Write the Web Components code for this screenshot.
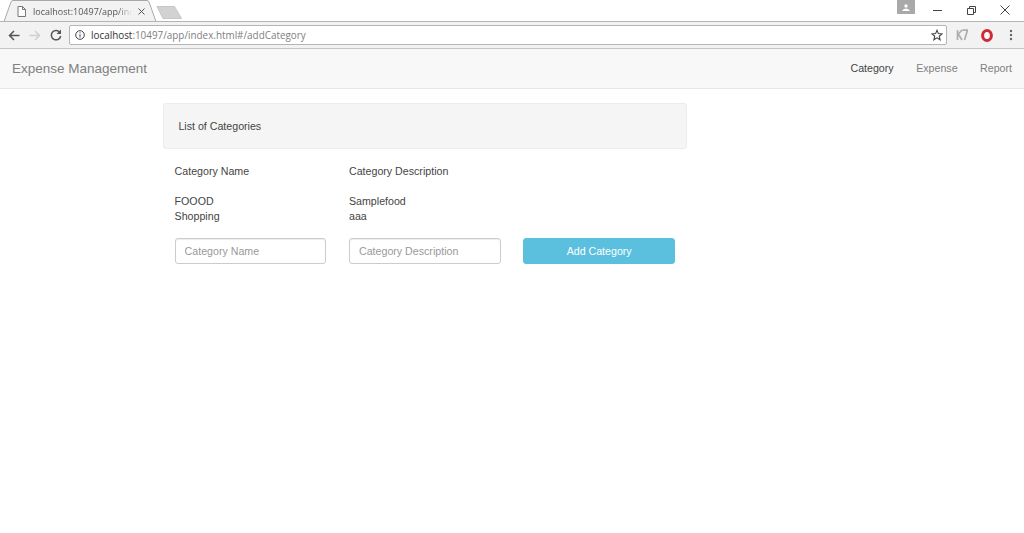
<!DOCTYPE html>
<html>
<head>
<meta charset="utf-8">
<title>Expense Management</title>
<style>
  html, body { margin: 0; height: 100%; background: #fff; overflow: hidden; }
  body { font: 10.65px/15px "Liberation Sans", Arial, sans-serif; color: #444; }
</style>
</head>
<body>
<browser-tabs></browser-tabs>
<browser-toolbar url="localhost" path=":10497/app/index.html#/addCategory"></browser-toolbar>
<app-navbar brand="Expense Management">
  <nav-link active>Category</nav-link>
  <nav-link>Expense</nav-link>
  <nav-link>Report</nav-link>
</app-navbar>
<category-page></category-page>

<script>
class BrowserTabs extends HTMLElement {
  constructor() {
    super();
    this.shadowDOM = this.attachShadow({ mode: 'open' });
    this.shadowDOM.innerHTML = `
      <style>
        :host { display: flex; height: 22px; background: #fff; position: relative; font: 9px "Open Sans", sans-serif; color: #555; }
        .line { position: absolute; left: 0; right: 0; bottom: 0; height: 1px; background: #b4b4b4; }
        .shape { position: absolute; left: 0; top: 0; }
        .tab { position: relative; display: flex; align-items: center; width: 152px; height: 22px; box-sizing: border-box; padding: 0 0 0 17px; }
        .title { margin-left: 7px; width: 101px; white-space: nowrap;
          -webkit-mask-image: linear-gradient(90deg, #000 84%, transparent 98%); }
        .close { margin-left: 4px; }
        .spacer { flex: 1; }
        .user { width: 18px; height: 14px; background: #a9a9a9; margin-right: 5px; display: flex; align-items: center; justify-content: center; position: relative; }
        .win { width: 34px; height: 20px; display: flex; align-items: center; justify-content: center; }
        .last { margin-right: 2px; }
      </style>
      <svg class="shape" width="190" height="22">
        <path d="M0 21.5H4L11 2Q11.500 .5 13 .5H147Q148.500 .5 149 2L156 21.500" fill="#f2f2f2" stroke="#a8a8a8"/>
        <path d="M157 6.500H174.500L181.500 18.500H163Z" fill="#d2d2d2" stroke="#c6c6c6"/>
      </svg>
      <div class="line"></div>
      <div class="tab">
        <svg width="9" height="11" viewBox="0 0 9 11"><path d="M1 .5H5.500L8.500 3.500V10.500H1ZM5.500 .5V3.500H8.500" fill="#fff" stroke="#777"/></svg>
        <span class="title">localhost:10497/app/inde</span>
        <svg class="close" width="7" height="7" viewBox="0 0 7 7"><path d="M.5 .5L6.500 6.500M6.500 .5L.5 6.500" stroke="#555"/></svg>
      </div>
      <div class="spacer"></div>
      <div class="user" style="align-self:flex-start">
        <svg width="8" height="7" viewBox="0 0 8 7"><circle cx="4" cy="2" r="1.700" fill="#fff"/><path d="M0 7Q1 4.500 4 4.500T8 7Z" fill="#fff"/></svg>
      </div>
      <div class="win"><svg width="9" height="1"><rect width="9" height="1" fill="#444"/></svg></div>
      <div class="win"><svg width="9" height="9" viewBox="0 0 9 9"><path d="M.5 2.500H6.500V8.500H.5ZM2.500 2.500V.5H8.500V6.500H6.500" fill="none" stroke="#444"/></svg></div>
      <div class="win last"><svg width="10" height="10" viewBox="0 0 10 10"><path d="M.5 .5L9.500 9.500M9.500 .5L.5 9.500" stroke="#444"/></svg></div>
    `;
  }
}

class BrowserToolbar extends HTMLElement {
  constructor() {
    super();
    this.shadowDOM = this.attachShadow({ mode: 'open' });
  }

  connectedCallback() {
    this.shadowDOM.innerHTML = `
      <style>
        :host { display: flex; align-items: center; height: 27px; box-sizing: border-box; background: #f2f2f2; border-bottom: 1px solid #c4c4c4; font: 9.9px "Open Sans", sans-serif; }
        .nav { display: flex; align-items: center; gap: 9px; margin-left: 8px; }
        .box { flex: 1; height: 20px; margin-left: 7px; box-sizing: border-box; background: #fff; border: 1px solid #b5b5b5; border-radius: 2px; display: flex; align-items: center; padding: 0 3px 0 5px; }
        .url { margin-left: 6px; color: #333; white-space: nowrap; flex: 1; }
        .url span { color: #808080; }
        .ext { display: flex; align-items: center; margin: 0 11px 0 9px; }
        .ext svg + svg { margin-left: 13px; }
        .ext svg + svg + svg { margin-left: 16px; }
      </style>
      <div class="nav">
        <svg width="12" height="11" viewBox="0 0 12 11"><path d="M11.500 5.500H1.500M6 1L1.500 5.500L6 10" fill="none" stroke="#555" stroke-width="1.500"/></svg>
        <svg width="12" height="11" viewBox="0 0 12 11"><path d="M.5 5.500H10.500M6 1L10.500 5.500L6 10" fill="none" stroke="#d0d0d0" stroke-width="1.500"/></svg>
        <svg width="12" height="12" viewBox="0 0 12 12"><path d="M10 3.500A4.700 4.700 0 1 0 10.700 7" fill="none" stroke="#555" stroke-width="1.500"/><path d="M11 .5V5H6.500Z" fill="#555"/></svg>
      </div>
      <div class="box">
        <svg width="10" height="10" viewBox="0 0 10 10"><circle cx="5" cy="5" r="4.300" fill="none" stroke="#444"/><path d="M5 4.300V7.500M5 2.400V3.400" stroke="#444"/></svg>
        <div class="url">${this.getAttribute('url')}<span>${this.getAttribute('path')}</span></div>
        <svg width="12" height="12" viewBox="0 0 24 24"><path d="M12 2.500L14.800 9.200L22 9.800L16.500 14.500L18.200 21.500L12 17.800L5.800 21.500L7.500 14.500L2 9.800L9.200 9.200Z" fill="none" stroke="#444" stroke-width="2.200"/></svg>
      </div>
      <div class="ext">
        <svg width="12" height="12" viewBox="0 0 12 12"><path d="M1.500 1V11M1.500 6L6 1M2.500 5.500L6 11M6.500 1.200H11.500L8.500 11" fill="none" stroke="#a9b0b0" stroke-width="1.700"/></svg>
        <svg width="12" height="13" viewBox="0 0 12 13"><ellipse cx="6" cy="6.500" rx="4.400" ry="5" fill="none" stroke="#cf2a33" stroke-width="3"/><ellipse cx="6" cy="6.500" rx="1.300" ry="3.600" fill="#fff"/></svg>
        <svg width="4" height="12" viewBox="0 0 4 12"><circle cx="2" cy="2" r="1.200" fill="#666"/><circle cx="2" cy="6" r="1.200" fill="#666"/><circle cx="2" cy="10" r="1.200" fill="#666"/></svg>
      </div>
    `;
  }
}

class NavLink extends HTMLElement {
  constructor() {
    super();
    this.shadowDOM = this.attachShadow({ mode: 'open' });
    this.shadowDOM.innerHTML = `
      <style>
        :host { display: block; color: #808080; }
        :host([active]) { color: #444; }
      </style>
      <slot></slot>
    `;
  }
}

class AppNavbar extends HTMLElement {
  constructor() {
    super();
    this.shadowDOM = this.attachShadow({ mode: 'open' });
  }

  connectedCallback() {
    this.shadowDOM.innerHTML = `
      <style>
        :host { display: flex; align-items: center; justify-content: space-between; height: 40px; box-sizing: border-box; padding: 0 12px; background: #f8f8f8; border-bottom: 1px solid #e7e7e7; }
        .brand { font-size: 13.5px; color: #808080; }
        .links { display: flex; gap: 22.500px; }
      </style>
      <div class="brand">${this.getAttribute('brand')}</div>
      <div class="links"><slot></slot></div>
    `;
  }
}

class PanelHeading extends HTMLElement {
  constructor() {
    super();
    this.shadowDOM = this.attachShadow({ mode: 'open' });
    this.shadowDOM.innerHTML = `
      <style>
        :host { display: flex; align-items: center; height: 46px; box-sizing: border-box; padding: 0 14.400px; background: #f5f5f5; border: 1px solid #ececec; border-radius: 3px; }
      </style>
      <slot></slot>
    `;
  }
}

class TextField extends HTMLElement {
  constructor() {
    super();
    this.shadowDOM = this.attachShadow({ mode: 'open' });
  }

  connectedCallback() {
    this.shadowDOM.innerHTML = `
      <style>
        :host { display: block; }
        input { display: block; width: 100%; height: 26px; box-sizing: border-box; padding: 0 9px; background: #fff; border: 1px solid #ccc; border-radius: 3px; font: inherit; color: #555; box-shadow: inset 0 1px 1px rgba(0,0,0,.075); outline: none; }
        input::placeholder { color: #999; opacity: 1; }
      </style>
      <input type="text" placeholder="${this.getAttribute('placeholder')}">
    `;
  }
}

class InfoButton extends HTMLElement {
  constructor() {
    super();
    this.shadowDOM = this.attachShadow({ mode: 'open' });
    this.shadowDOM.innerHTML = `
      <style>
        :host { display: flex; align-items: center; justify-content: center; height: 26px; box-sizing: border-box; background: #5bc0de; border: 1px solid #5bc0de; border-radius: 3px; color: #fff; cursor: pointer; }
      </style>
      <slot></slot>
    `;
  }
}

class CategoryPage extends HTMLElement {
  constructor() {
    super();
    this.shadowDOM = this.attachShadow({ mode: 'open' });
    this.categories = [
      { name: 'FOOOD', description: 'Samplefood' },
      { name: 'Shopping', description: 'aaa' },
    ];
  }

  connectedCallback() {
    const rows = this.categories.map((c) => `
      <div>${c.name}</div><div>${c.description}</div><div></div>
    `).join('');
    this.shadowDOM.innerHTML = `
      <style>
        :host { display: block; width: 524px; margin: 14px 0 0 163px; }
        .grid { display: grid; grid-template-columns: repeat(3, 151.600px); column-gap: 22.800px; padding: 15px 0 0 11.600px; }
        .head { margin-bottom: 15px; }
        .form { margin-top: 14px; }
      </style>
      <panel-heading>List of Categories</panel-heading>
      <div class="grid">
        <div class="head">Category Name</div><div class="head">Category Description</div><div class="head"></div>
        ${rows}
        <text-field class="form" placeholder="Category Name"></text-field>
        <text-field class="form" placeholder="Category Description"></text-field>
        <info-button class="form">Add Category</info-button>
      </div>
    `;
  }
}

customElements.define('browser-tabs', BrowserTabs);
customElements.define('browser-toolbar', BrowserToolbar);
customElements.define('nav-link', NavLink);
customElements.define('app-navbar', AppNavbar);
customElements.define('panel-heading', PanelHeading);
customElements.define('text-field', TextField);
customElements.define('info-button', InfoButton);
customElements.define('category-page', CategoryPage);
</script>
</body>
</html>
